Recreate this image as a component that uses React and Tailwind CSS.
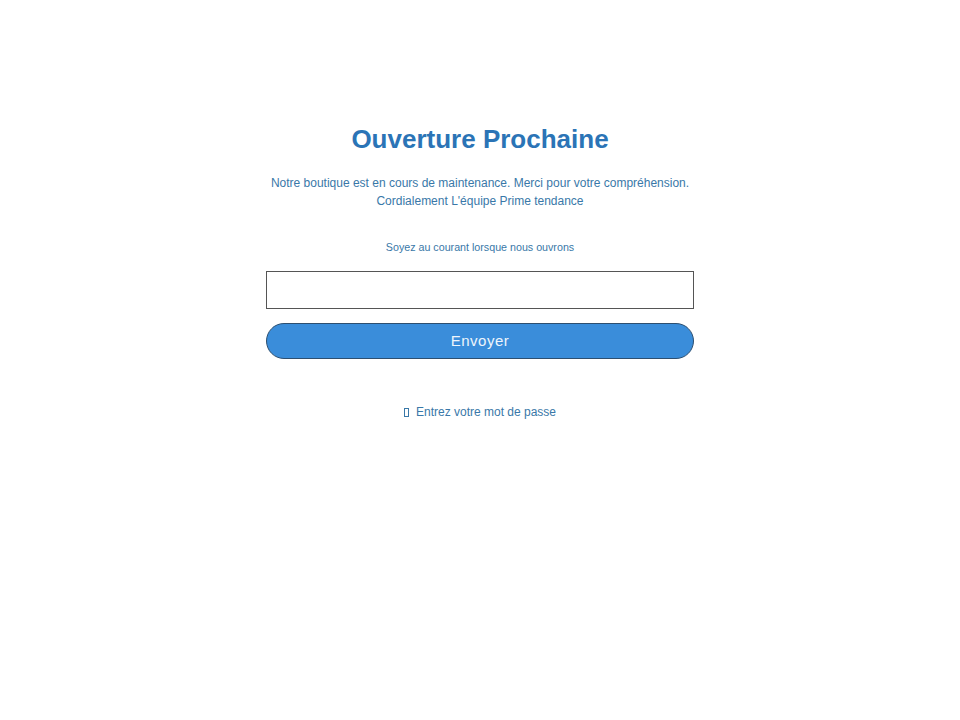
import React from 'react';

const App = () => {
  return (
    <div className="min-h-[720px] w-full bg-white" style={{ fontFamily: '"Liberation Sans", Arial, sans-serif' }}>
      <div className="mx-auto flex w-[428px] flex-col items-center pt-[122px]">
        <h1 className="text-[26px] font-bold leading-[34px] text-[#2b74b6] whitespace-nowrap">Ouverture Prochaine</h1>

        <div className="mt-[18px] text-center text-[12px] leading-[18px] text-[#3978a8] whitespace-nowrap">
          <p>Notre boutique est en cours de maintenance. Merci pour votre compréhension.</p>
          <p>Cordialement L'équipe Prime tendance</p>
        </div>

        <p className="mt-[30px] text-[10.7px] leading-[14px] text-[#3978a8]">Soyez au courant lorsque nous ouvrons</p>

        <form className="mt-[17px] w-full" onSubmit={(e) => e.preventDefault()}>
          <input
            type="email"
            className="block h-[38px] w-full border border-[#555] bg-white px-3 text-[13px] outline-none"
          />
          <button
            type="submit"
            className="mt-[14px] block h-[36px] w-full rounded-full border border-[#2d4f70] bg-[#3a8dda] text-[15px] tracking-[0.5px] text-[#eef5fc]"
          >
            Envoyer
          </button>
        </form>

        <div className="mt-[45px] flex items-center gap-[7px] text-[12px] leading-[16px] text-[#3978a8]">
          <span className="inline-block h-[9px] w-[5px] border border-[#3978a8]"></span>
          <span>Entrez votre mot de passe</span>
        </div>
      </div>
    </div>
  );
};

export default App;
